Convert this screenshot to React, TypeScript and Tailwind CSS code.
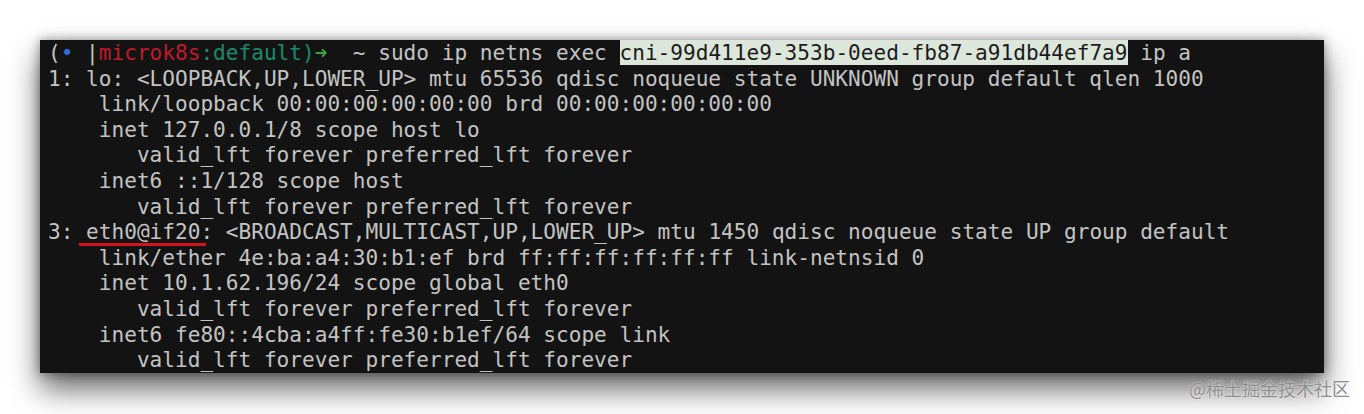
const lines: string[] = [
  "1: lo: <LOOPBACK,UP,LOWER_UP> mtu 65536 qdisc noqueue state UNKNOWN group default qlen 1000",
  "    link/loopback 00:00:00:00:00:00 brd 00:00:00:00:00:00",
  "    inet 127.0.0.1/8 scope host lo",
  "       valid_lft forever preferred_lft forever",
  "    inet6 ::1/128 scope host",
  "       valid_lft forever preferred_lft forever",
];

const tail: string[] = [
  "    link/ether 4e:ba:a4:30:b1:ef brd ff:ff:ff:ff:ff:ff link-netnsid 0",
  "    inet 10.1.62.196/24 scope global eth0",
  "       valid_lft forever preferred_lft forever",
  "    inet6 fe80::4cba:a4ff:fe30:b1ef/64 scope link",
  "       valid_lft forever preferred_lft forever",
];

const Line = ({ children }: { children: React.ReactNode }) => (
  <div className="h-[25.6px] leading-[25.6px] whitespace-pre">{children}</div>
);

export default function App() {
  return (
    <div className="w-[1364px] h-[414px] bg-white overflow-hidden pt-[40px]">
      <div className="ml-[40px] w-[1284px] h-[333px] bg-[#131313] overflow-hidden shadow-[0_16px_28px_rgba(0,0,0,0.6),0_0_10px_rgba(0,0,0,0.4)]">
        <div className="pl-[8px] pt-0 text-[21.1px] text-[#c3c3c3] font-['DejaVu_Sans_Mono',monospace]">
          <Line>
            <span>(</span>
            <span className="text-[#2f6fd6]">•</span>
            <span> |</span>
            <span className="text-[#c2192b]">microk8s</span>
            <span className="text-[#1c8a6c]">:default)</span>
            <span className="text-[#3ea53a]">➜</span>
            <span>  ~ sudo ip netns exec </span>
            <span className="bg-[#dde6da] text-[#1c1c1c]">cni-99d411e9-353b-0eed-fb87-a91db44ef7a9</span>
            <span> ip a</span>
          </Line>
          {lines.map((l, i) => (
            <Line key={i}>{l}</Line>
          ))}
          <Line>
            <span>3: </span>
            <span className="relative">
              eth0@if20:
              <span className="absolute left-[-7px] right-[7px] top-[24px] h-[3px] bg-[#d4141a]" />
            </span>
            <span> &lt;BROADCAST,MULTICAST,UP,LOWER_UP&gt; mtu 1450 qdisc noqueue state UP group default</span>
          </Line>
          {tail.map((l, i) => (
            <Line key={i}>{l}</Line>
          ))}
        </div>
      </div>
      <div className="flex justify-end pr-[14px] mt-[3px]">
        <span className="text-[18px] leading-[24px] text-[#8e8e8e] font-['Noto_Sans_CJK_SC',sans-serif] [text-shadow:0_0_2px_rgba(255,255,255,0.9)]">
          @稀土掘金技术社区
        </span>
      </div>
    </div>
  );
}
